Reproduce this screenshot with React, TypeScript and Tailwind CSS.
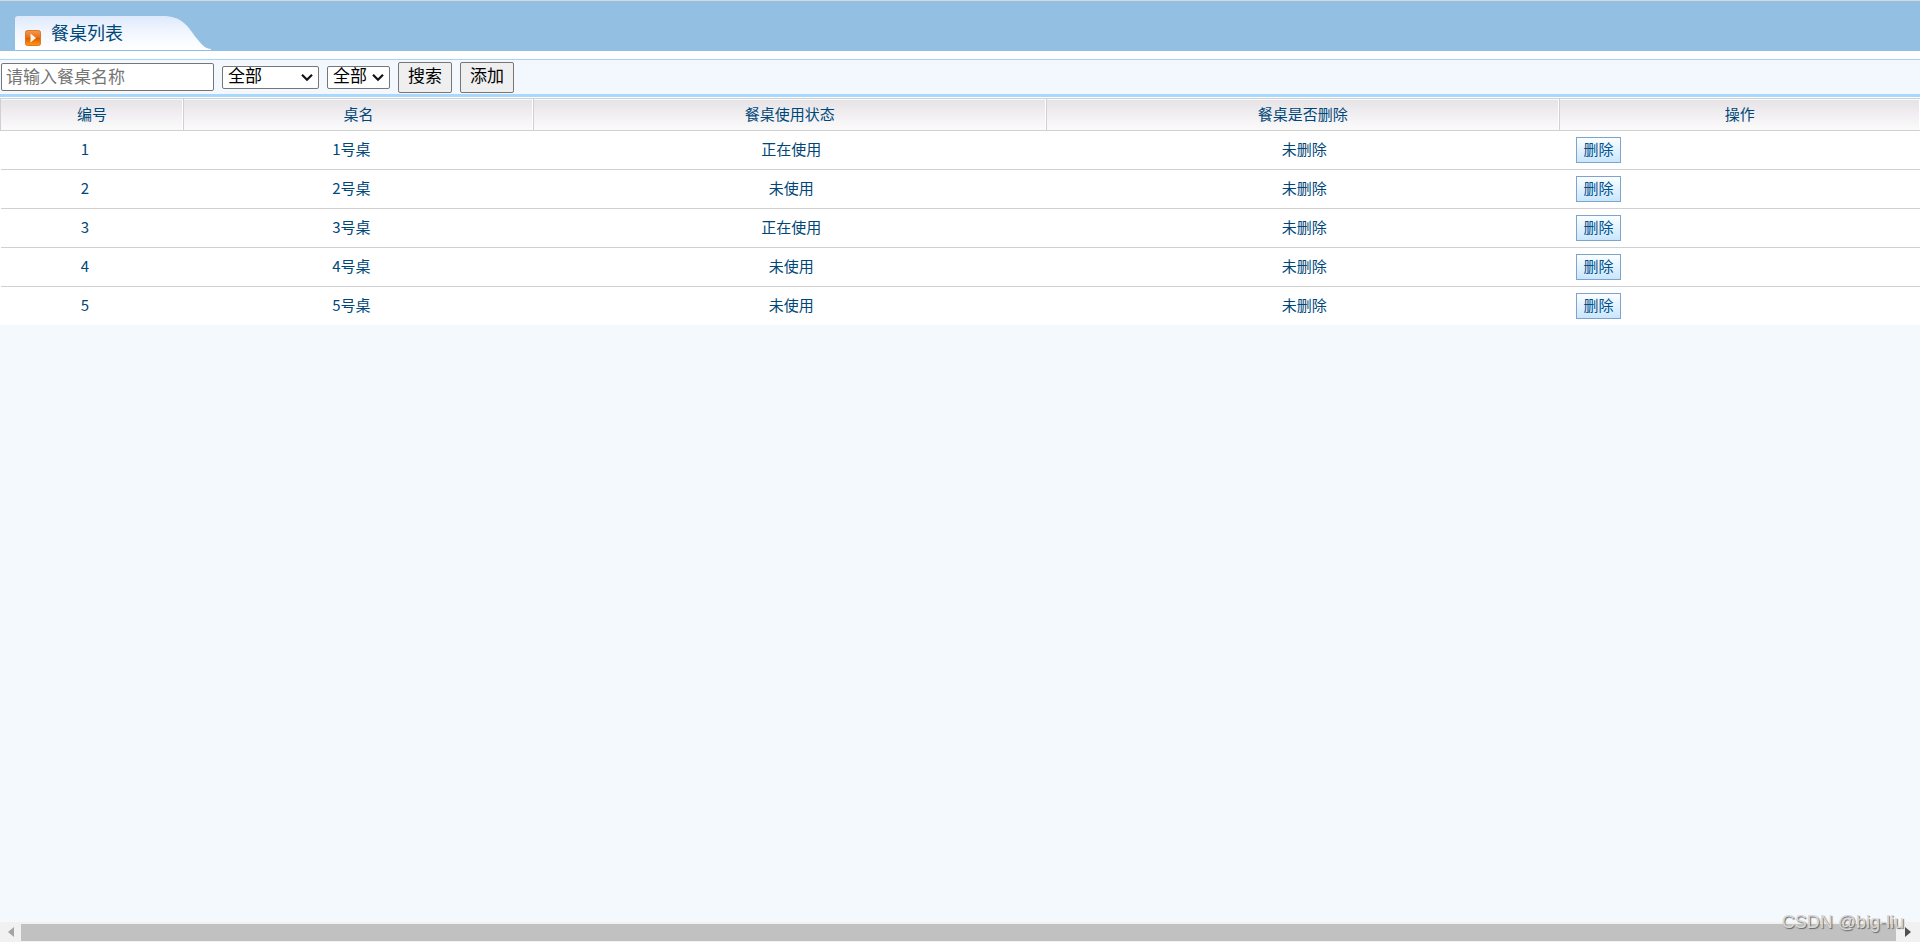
import React from "react";

type DiningTable = { id: number; name: string; status: string; deleted: string };

const tables: DiningTable[] = [
  { id: 1, name: "1号桌", status: "正在使用", deleted: "未删除" },
  { id: 2, name: "2号桌", status: "未使用", deleted: "未删除" },
  { id: 3, name: "3号桌", status: "正在使用", deleted: "未删除" },
  { id: 4, name: "4号桌", status: "未使用", deleted: "未删除" },
  { id: 5, name: "5号桌", status: "未使用", deleted: "未删除" },
];

const headings = ["编号", "桌名", "餐桌使用状态", "餐桌是否删除", "操作"];

function TitleBar() {
  return (
    <header className="flex border-t border-t-[#d8d8d8] border-b border-b-[#8fbfe3] bg-[#93bfe2] pt-[15px] pl-[15px]">
      <div className="relative h-[34px] w-[196px]">
        <svg className="absolute inset-0 h-full w-full" viewBox="0 0 196 34" aria-hidden="true">
          <defs>
            <linearGradient id="tab" x1="0" y1="0" x2="0" y2="1">
              <stop offset="0" stopColor="#dde9fc" />
              <stop offset="0.45" stopColor="#f1f6fe" />
              <stop offset="1" stopColor="#ffffff" />
            </linearGradient>
          </defs>
          <path
            d="M0 34V3Q0 0 3 0H148C157 0 163 2 169 7C174 11 178 18 183 24C187 29 191 33 196 33V34Z"
            fill="url(#tab)"
          />
        </svg>
        <div className="relative flex h-full items-end gap-[10px] pb-1 pl-[10px]">
          <svg className="h-4 w-4" viewBox="0 0 16 16" aria-hidden="true">
            <defs>
              <linearGradient id="play" x1="0" y1="0" x2="0" y2="1">
                <stop offset="0" stopColor="#f09a55" />
                <stop offset="0.45" stopColor="#e8731c" />
                <stop offset="0.5" stopColor="#d95a00" />
                <stop offset="1" stopColor="#ff9a10" />
              </linearGradient>
            </defs>
            <rect x="0.5" y="0.5" width="15" height="15" rx="2" fill="url(#play)" stroke="#e0761e" />
            <path d="M5.5 3.5L11 8L5.5 12.5Z" fill="#fff3e4" />
          </svg>
          <h1 className="pb-[2px] text-lg leading-6 text-[#004779]">餐桌列表</h1>
        </div>
      </div>
    </header>
  );
}

function Select({ label, className }: { label: string; className: string }) {
  return (
    <div className={`relative ${className}`}>
      <select
        aria-label={label}
        className="block h-[23px] w-full appearance-none rounded-xs border border-[#767676] bg-white pl-[5px] text-[17px] leading-5 text-black"
      >
        <option>全部</option>
      </select>
      <svg
        className="pointer-events-none absolute top-[7px] right-[6px] h-[9px] w-3"
        viewBox="0 0 12 9"
        fill="none"
        stroke="#111"
        strokeWidth="2.2"
        aria-hidden="true"
      >
        <path d="M1 1.8L6 6.8L11 1.8" />
      </svg>
    </div>
  );
}

function ToolButton({ children }: { children: React.ReactNode }) {
  return (
    <button
      type="button"
      className="h-[31px] w-[54px] rounded-xs border border-[#767676] bg-[#efefef] text-[17px] leading-5 text-black"
    >
      {children}
    </button>
  );
}

function Toolbar() {
  return (
    <form
      className="mt-2 flex h-[38px] items-center gap-2 border-t border-b-[3px] border-t-[#a8d5f5] border-b-[#a8d8fb] bg-[#f3f8fe] pl-px font-['Liberation_Sans','Noto_Sans_CJK_SC',sans-serif]"
      onSubmit={(e) => e.preventDefault()}
    >
      <input
        type="text"
        aria-label="餐桌名称"
        placeholder="请输入餐桌名称"
        className="h-7 w-[213px] rounded-xs border border-[#767676] bg-white pt-px pr-1 pl-1 text-[17px] leading-5 text-black placeholder:text-[#757575]"
      />
      <Select label="使用状态" className="w-[97px]" />
      <Select label="是否删除" className="w-[63px]" />
      <ToolButton>搜索</ToolButton>
      <ToolButton>添加</ToolButton>
    </form>
  );
}

function TableList() {
  return (
    <table className="mt-px w-full table-fixed border-collapse bg-white text-[15px] leading-5 text-[#004779]">
      <colgroup>
        <col className="w-[9.53%]" />
        <col className="w-[18.23%]" />
        <col className="w-[26.72%]" />
        <col className="w-[26.72%]" />
        <col />
      </colgroup>
      <thead>
        <tr className="h-8 border-y border-[#d0d0d0] bg-linear-to-b from-[#e6e3e6] to-[#fcfbfc]">
          {headings.map((h) => (
            <th key={h} className="border-l border-[#d0d0d0] p-0 pb-[2px] font-normal shadow-[inset_-1px_0_0_#fff]">
              {h}
            </th>
          ))}
        </tr>
      </thead>
      <tbody>
        {tables.map((t) => (
          <tr key={t.id} className="h-[39px] border-b border-[#d0d0d0] text-center last:h-[38px] last:border-b-0">
            <td className="p-0 pr-[14px] pb-[2px]">{t.id}</td>
            <td className="p-0 pr-[14px] pb-[2px]">{t.name}</td>
            <td className="p-0 pb-[2px] pl-[3px]">{t.status}</td>
            <td className="p-0 pb-[2px] pl-[3px]">{t.deleted}</td>
            <td className="p-0 pl-[17px] text-left">
              <button
                type="button"
                className="block h-[26px] w-[45px] border border-[#7ea4cc] bg-linear-to-b from-[#fbfeff] to-[#c9e6fc] pb-[2px] text-[15px] leading-5 text-[#00508c]"
              >
                {"删除"}
              </button>
            </td>
          </tr>
        ))}
      </tbody>
    </table>
  );
}

function ScrollBar() {
  return (
    <div className="relative flex h-5 items-center bg-[#f1f1f1]">
      <button type="button" aria-label="向左滚动" className="flex h-5 w-[21px] items-center justify-center">
        <svg className="h-[10px] w-[6px]" viewBox="0 0 6 10" aria-hidden="true">
          <path d="M6 0V10L0 5Z" fill="#a3a3a3" />
        </svg>
      </button>
      <div className="h-[17px] flex-1 bg-[#c1c1c1]" />
      <button type="button" aria-label="向右滚动" className="flex h-5 w-6 items-center justify-center">
        <svg className="h-[10px] w-[6px]" viewBox="0 0 6 10" aria-hidden="true">
          <path d="M0 0V10L6 5Z" fill="#505050" />
        </svg>
      </button>
      <span className="pointer-events-none absolute right-4 bottom-2 font-['Liberation_Sans',sans-serif] text-lg leading-6 text-[#d8d8d8] [text-shadow:1px_1px_1px_#666]">
        CSDN @big-liu
      </span>
    </div>
  );
}

export default function App() {
  return (
    <div className="flex min-h-screen flex-col bg-[#f4f9fd] font-['Noto_Sans_CJK_SC',sans-serif]">
      <main className="flex-1">
        <div className="bg-white">
          <TitleBar />
          <Toolbar />
          <TableList />
        </div>
      </main>
      <ScrollBar />
    </div>
  );
}
